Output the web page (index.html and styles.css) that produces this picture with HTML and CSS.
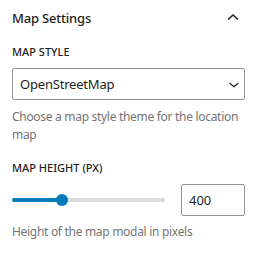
FILE: index.html
```html
<!DOCTYPE html>
<html lang="en">

<head>
    <meta charset="UTF-8">
    <meta name="viewport" content="width=device-width, initial-scale=1.0">
    <link rel="stylesheet" href="styles.css">
</head>

<body>

    <div class="panel">
        <div class="panel-header">
            <span class="panel-title">Map Settings</span>
            <svg class="toggle-icon" width="12" height="8" viewBox="0 0 12 8">
                <polyline points="1,6.5 6,2 11,6.5" fill="none" stroke="#1e1e1e" stroke-width="1.5"/>
            </svg>
        </div>

        <div class="field">
            <label class="field-label">Map Style</label>
            <div class="select-box">
                <span class="select-value">OpenStreetMap</span>
                <svg class="select-arrow" width="12" height="8" viewBox="0 0 12 8">
                    <polyline points="1.5,2 6,5.8 10.5,2" fill="none" stroke="#1e1e1e" stroke-width="1.2"/>
                </svg>
            </div>
            <p class="field-help">Choose a map style theme for the location map</p>
        </div>

        <div class="field">
            <label class="field-label">Map Height (px)</label>
            <div class="range-row">
                <div class="range-track">
                    <div class="range-fill" style="width: 33%;"></div>
                    <div class="range-thumb" style="left: 33%;"></div>
                </div>
                <div class="number-box">400</div>
            </div>
            <p class="field-help">Height of the map modal in pixels</p>
        </div>
    </div>

</body>

</html>
```
FILE: styles.css
```css
body {
    margin: 0;
    padding: 0;
    font-family: "Noto Sans", sans-serif;
    font-size: 13px;
    color: #1e1e1e;
    background: #fff;
}

.panel {
    padding: 4px 15px 0 12px;
}

.panel-header {
    display: flex;
    align-items: center;
    justify-content: space-between;
    height: 28px;
    margin-bottom: 12px;
}

.panel-title {
    font-size: 13px;
    font-weight: 500;
    letter-spacing: -0.2px;
}

.toggle-icon {
    margin-right: 6px;
    margin-top: -3px;
}

.field {
    margin-bottom: 16px;
}

.field-label {
    display: block;
    font-size: 11px;
    font-weight: 500;
    text-transform: uppercase;
    line-height: 16px;
    margin-bottom: 8px;
}

.select-box {
    display: flex;
    align-items: center;
    justify-content: space-between;
    height: 30px;
    border: 1px solid #949494;
    border-radius: 2px;
    padding: 0 4px 0 7px;
}

.select-value {
    font-size: 13px;
    letter-spacing: -0.2px;
}

.select-arrow {
    margin-top: 1px;
}

.field-help {
    margin: 8px 0 0;
    font-size: 12px;
    line-height: 18px;
    letter-spacing: -0.3px;
    color: #757575;
}

.range-row {
    display: flex;
    align-items: center;
}

.range-track {
    position: relative;
    flex: 1;
    height: 4px;
    border-radius: 2px;
    background: #ddd;
    margin-right: 16px;
}

.range-fill {
    height: 4px;
    border-radius: 2px;
    background: #007cba;
}

.range-thumb {
    position: absolute;
    top: -4px;
    width: 12px;
    height: 12px;
    margin-left: -6px;
    border-radius: 50%;
    background: #007cba;
}

.number-box {
    width: 48px;
    height: 30px;
    line-height: 30px;
    border: 1px solid #949494;
    border-radius: 2px;
    padding: 0 7px;
}

.field:last-child .field-help {
    margin-top: 7px;
}
```
